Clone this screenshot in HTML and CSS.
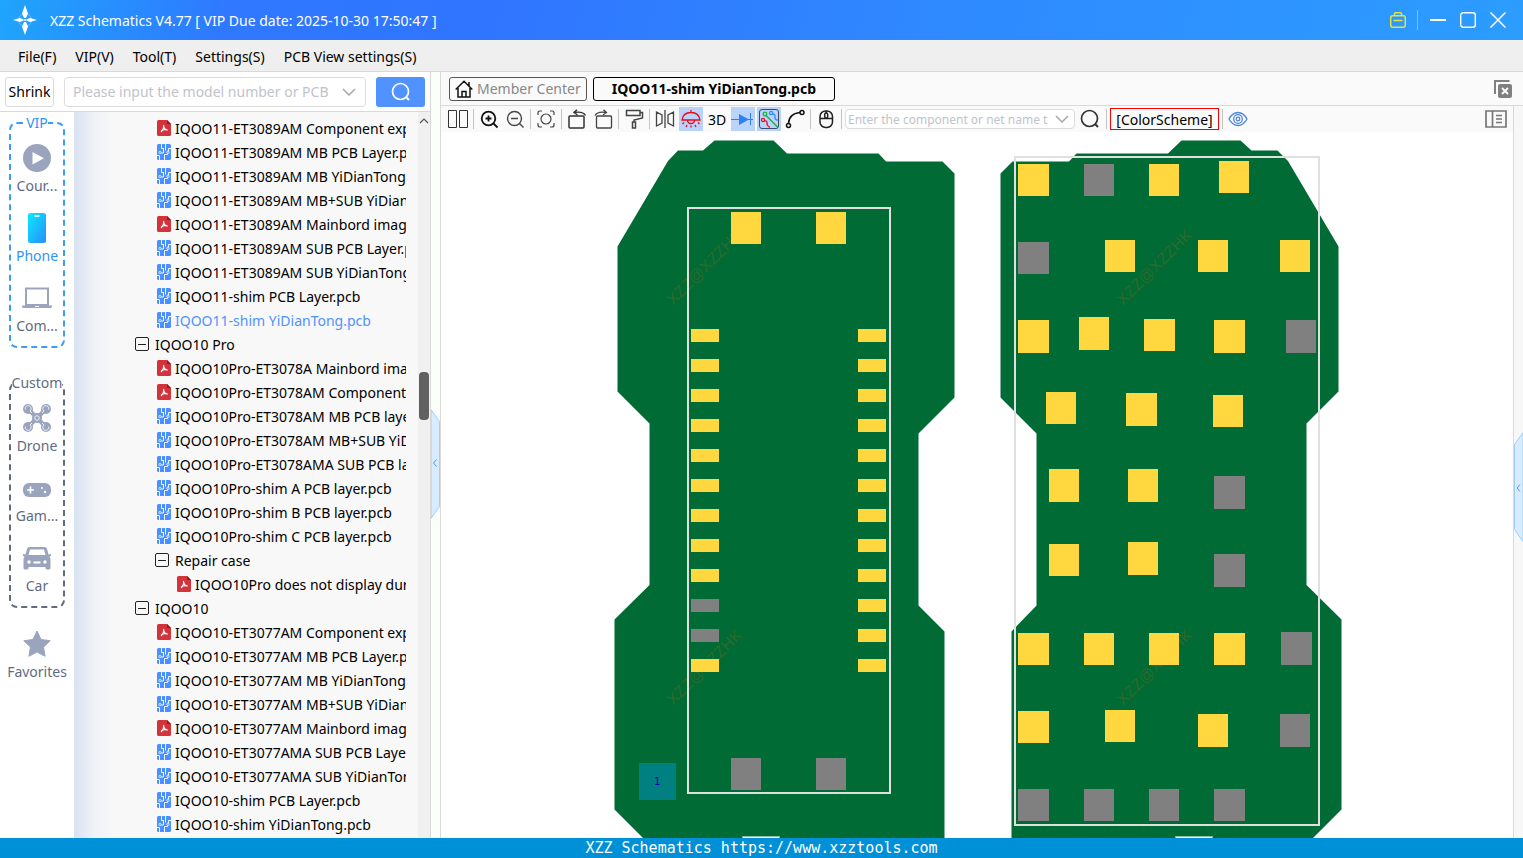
FILE: index.html
```html
<!DOCTYPE html>
<html lang="en">
<head>
  <meta charset="UTF-8">
  <title>XZZ Schematics</title>
  <link rel="stylesheet" href="styles.css">
</head>
<body>
  <!-- shared icons -->
  <svg class="sprite" aria-hidden="true">
    <symbol id="i-pdf" viewBox="0 0 14 16">
      <path d="M1.5 0H10l4 4v10.500q0 1.500-1.500 1.500h-11Q0 16 0 14.500v-13Q0 0 1.500 0z" fill="#d2343c"/>
      <path d="M10 0l4 4h-4z" fill="#8c1a22"/>
      <path d="M6.500 5c1 2-1 5.500-2.500 7M6.800 7c.5 2 2 3 4 3M4 11c2-1.500 4-1.600 6.500-1" fill="none" stroke="#fff" stroke-width="1.100"/>
    </symbol>
    <symbol id="i-pcb" viewBox="0 0 14 16">
      <rect width="14" height="16" rx="1.500" fill="#4a90ff"/>
      <path d="M4.500 0v4.500h2V9H4M8.500 0v6.500M14 4.500h-2.500V7M2.500 16v-4.500H0M7.500 16v-5.500h3V9.500" fill="none" stroke="#fff" stroke-width=".9"/>
      <circle cx="3" cy="8.500" r="1.100" fill="#4a90ff" stroke="#fff" stroke-width=".8"/>
      <circle cx="11" cy="8.300" r="1.200" fill="#4a90ff" stroke="#fff" stroke-width=".8"/>
    </symbol>
    <symbol id="i-down" viewBox="0 0 14 8">
      <path d="M1 1l6 6 6-6" fill="none" stroke="#a4a8b0" stroke-width="1.500"/>
    </symbol>
    <symbol id="i-search" viewBox="0 0 20 20">
      <circle cx="9.500" cy="9.500" r="8" fill="none" stroke="currentColor" stroke-width="1.700"/>
      <path d="M15 15l3 3" stroke="currentColor" stroke-width="1.900"/>
    </symbol>
  </svg>

  <header class="titlebar">
    <svg class="logo" width="24" height="30" viewBox="0 0 24 30">
      <circle cx="12" cy="15" r="6.500" fill="none" stroke="#8fcbff" stroke-opacity=".7"/>
      <path d="M12 0l3 8.500-2 4.500h-2L9 8.500zM12 30l-3-8.500 2-4.500h2l2 4.500zM0 15l7-2 3.500 1.200v1.600L7 17zM24 15l-7-2-3.500 1.200v1.600L17 17z" fill="#fff"/>
      <circle cx="12" cy="15" r="1" fill="#fff"/>
    </svg>
    <span class="app-title">XZZ Schematics V4.77 [ VIP Due date: 2025-10-30 17:50:47 ]</span>
    <div class="window-buttons">
      <button aria-label="Toolbox">
        <svg width="16" height="16" viewBox="0 0 16 16" fill="none" stroke="#e3e43c" stroke-width="1.500"><rect x=".7" y="3.700" width="14.600" height="11.600" rx="2"/><path d="M4.500 3.500V1.700Q4.500.8 5.500.8h5q1 0 1 .9v1.800M3.500 8.500h9"/></svg>
      </button>
      <i class="bar-line"></i>
      <button aria-label="Minimize">
        <svg width="16" height="16" viewBox="0 0 16 16"><path d="M0 8h16" stroke="#fff" stroke-width="2"/></svg>
      </button>
      <button aria-label="Maximize">
        <svg width="16" height="16" viewBox="0 0 16 16"><rect x=".7" y=".7" width="14.600" height="14.600" rx="2.500" fill="none" stroke="#fff" stroke-width="1.400"/></svg>
      </button>
      <button aria-label="Close">
        <svg width="16" height="16" viewBox="0 0 16 16"><path d="M.5.5l15 15m0-15l-15 15" stroke="#fff" stroke-width="1.500"/></svg>
      </button>
    </div>
  </header>

  <nav class="menubar">
    <button>File(F)</button>
    <button>VIP(V)</button>
    <button>Tool(T)</button>
    <button>Settings(S)</button>
    <button>PCB View settings(S)</button>
  </nav>

  <div class="workspace">
    <aside class="sidebar">
      <div class="search-row">
        <button class="shrink">Shrink</button>
        <div class="combo">
          <input type="text" aria-label="Model number" placeholder="Please input the model number or PCB">
          <button aria-label="Show list"><svg width="14" height="8"><use href="#i-down"/></svg></button>
        </div>
        <button class="search-btn" aria-label="Search"><svg width="20" height="20"><use href="#i-search"/></svg></button>
      </div>

      <div class="sidebar-body">
        <nav class="categories">
          <fieldset class="vip">
            <legend>VIP</legend>
            <a href="#">
              <svg width="30" height="30" viewBox="0 0 30 30"><circle cx="15" cy="15" r="14" fill="#9aa5bd"/><path d="M10.500 9v12.500L22 15.200z" fill="#fff"/></svg>
              <span>Cour...</span>
            </a>
            <a href="#" class="current">
              <svg width="30" height="30" viewBox="0 0 30 30">
                <defs><linearGradient id="phone-fill" x1="0" x2="1" y1="0" y2="1"><stop offset="0" stop-color="#08eaff"/><stop offset="1" stop-color="#2b8dfb"/></linearGradient></defs>
                <rect x="6" y="0" width="18" height="30" rx="2.500" fill="url(#phone-fill)"/><path d="M12.500 3h5" stroke="#fff" stroke-width="1.600"/>
              </svg>
              <span>Phone</span>
            </a>
            <a href="#">
              <svg width="30" height="30" viewBox="0 0 30 30"><path d="M4 5.500h22V22H4z" fill="none" stroke="#9aa5bd" stroke-width="2"/><path d="M0 22.500h30v1q0 1.500-2 1.500H2q-2 0-2-1.500z" fill="#9aa5bd"/><path d="M13 23.500h4" stroke="#fff"/></svg>
              <span>Com...</span>
            </a>
          </fieldset>

          <fieldset class="custom">
            <legend>Custom</legend>
            <a href="#">
              <svg width="30" height="30" viewBox="0 0 30 30">
                <path d="M6 6l18 18M24 6L6 24" stroke="#9aa5bd" stroke-width="4"/>
                <g fill="#9aa5bd"><circle cx="6" cy="6" r="5"/><circle cx="24" cy="6" r="5"/><circle cx="6" cy="24" r="5"/><circle cx="24" cy="24" r="5"/><circle cx="15" cy="15" r="5"/></g>
                <g fill="none" stroke="#fff" stroke-width=".8"><circle cx="15" cy="15" r="2.300"/><path d="M3.300 6.500A3 3 0 1 1 8 8l2 2M26.700 6.500A3 3 0 1 0 22 8l-2 2M3.300 23.500A3 3 0 1 0 8 22l2-2M26.700 23.500A3 3 0 1 1 22 22l-2-2"/></g>
              </svg>
              <span>Drone</span>
            </a>
            <a href="#">
              <svg width="30" height="30" viewBox="0 0 30 30"><rect x="1" y="10" width="28" height="14" rx="6" fill="#9aa5bd"/><path d="M5 17h7M8.500 13.500v7" stroke="#fff" stroke-width="1.600"/><circle cx="20" cy="15" r="1" fill="#fff"/><circle cx="23" cy="19" r="1.200" fill="#fff"/></svg>
              <span>Gam...</span>
            </a>
            <a href="#">
              <svg width="30" height="30" viewBox="0 0 30 30">
                <path d="M7.500 4h15q2 0 2.500 2l1.500 5.500L29 11v2l-1.500.5q1 1.500 1 3V25q0 1.500-1.500 1.500h-2q-1.500 0-1.500-1.500v-1h-17v1Q6.500 26.500 5 26.500H3q-1.500 0-1.500-1.500v-8.500q0-1.500 1-3L1 13v-2l2.500.5L5 6q.500-2 2.500-2z" fill="#9aa5bd"/>
                <path d="M8 6.500h14l1.500 5.500h-17zM11.500 18.500h7v2h-7z" fill="#fff"/><circle cx="7" cy="19" r="1.700" fill="#fff"/><circle cx="23" cy="19" r="1.700" fill="#fff"/>
              </svg>
              <span>Car</span>
            </a>
          </fieldset>

          <a href="#" class="favorites">
            <svg width="30" height="30" viewBox="0 0 30 30"><path d="M15 2l4 8.500 9.200 1.200-6.700 6.400 1.600 9.200L15 23l-8.100 4.300 1.600-9.200-6.700-6.400L11 10.500z" fill="#9aa5bd" stroke="#9aa5bd" stroke-linejoin="round"/></svg>
            <span>Favorites</span>
          </a>
        </nav>

        <div class="tree-panel">
          <ul class="tree">
            <li><svg><use href="#i-pdf"/></svg><a href="#">IQOO11-ET3089AM Component explanation.pdf</a></li>
            <li><svg><use href="#i-pcb"/></svg><a href="#">IQOO11-ET3089AM MB PCB Layer.pcb</a></li>
            <li><svg><use href="#i-pcb"/></svg><a href="#">IQOO11-ET3089AM MB YiDianTong.pcb</a></li>
            <li><svg><use href="#i-pcb"/></svg><a href="#">IQOO11-ET3089AM MB+SUB YiDianTong.pcb</a></li>
            <li><svg><use href="#i-pdf"/></svg><a href="#">IQOO11-ET3089AM Mainbord image.pdf</a></li>
            <li><svg><use href="#i-pcb"/></svg><a href="#">IQOO11-ET3089AM SUB PCB Layer.pcb</a></li>
            <li><svg><use href="#i-pcb"/></svg><a href="#">IQOO11-ET3089AM SUB YiDianTong.pcb</a></li>
            <li><svg><use href="#i-pcb"/></svg><a href="#">IQOO11-shim PCB Layer.pcb</a></li>
            <li class="open-file"><svg><use href="#i-pcb"/></svg><a href="#">IQOO11-shim YiDianTong.pcb</a></li>
            <li class="group"><button class="toggle" aria-label="Collapse"></button><span>IQOO10 Pro</span></li>
            <li><svg><use href="#i-pdf"/></svg><a href="#">IQOO10Pro-ET3078A Mainbord image.pdf</a></li>
            <li><svg><use href="#i-pdf"/></svg><a href="#">IQOO10Pro-ET3078AM Component.pdf</a></li>
            <li><svg><use href="#i-pcb"/></svg><a href="#">IQOO10Pro-ET3078AM MB PCB layer.pcb</a></li>
            <li><svg><use href="#i-pcb"/></svg><a href="#">IQOO10Pro-ET3078AM MB+SUB YiDianTong.pcb</a></li>
            <li><svg><use href="#i-pcb"/></svg><a href="#">IQOO10Pro-ET3078AMA SUB PCB layer.pcb</a></li>
            <li><svg><use href="#i-pcb"/></svg><a href="#">IQOO10Pro-shim A PCB layer.pcb</a></li>
            <li><svg><use href="#i-pcb"/></svg><a href="#">IQOO10Pro-shim B PCB layer.pcb</a></li>
            <li><svg><use href="#i-pcb"/></svg><a href="#">IQOO10Pro-shim C PCB layer.pcb</a></li>
            <li class="subgroup"><button class="toggle" aria-label="Collapse"></button><span>Repair case</span></li>
            <li class="deep"><svg><use href="#i-pdf"/></svg><a href="#">IQOO10Pro does not display during startup.pdf</a></li>
            <li class="group"><button class="toggle" aria-label="Collapse"></button><span>IQOO10</span></li>
            <li><svg><use href="#i-pdf"/></svg><a href="#">IQOO10-ET3077AM Component explanation.pdf</a></li>
            <li><svg><use href="#i-pcb"/></svg><a href="#">IQOO10-ET3077AM MB PCB Layer.pcb</a></li>
            <li><svg><use href="#i-pcb"/></svg><a href="#">IQOO10-ET3077AM MB YiDianTong.pcb</a></li>
            <li><svg><use href="#i-pcb"/></svg><a href="#">IQOO10-ET3077AM MB+SUB YiDianTong.pcb</a></li>
            <li><svg><use href="#i-pdf"/></svg><a href="#">IQOO10-ET3077AM Mainbord image.pdf</a></li>
            <li><svg><use href="#i-pcb"/></svg><a href="#">IQOO10-ET3077AMA SUB PCB Layer.pcb</a></li>
            <li><svg><use href="#i-pcb"/></svg><a href="#">IQOO10-ET3077AMA SUB YiDianTong.pcb</a></li>
            <li><svg><use href="#i-pcb"/></svg><a href="#">IQOO10-shim PCB Layer.pcb</a></li>
            <li><svg><use href="#i-pcb"/></svg><a href="#">IQOO10-shim YiDianTong.pcb</a></li>
          </ul>
          <div class="scrollbar">
            <svg width="10" height="6" viewBox="0 0 10 6"><path d="M1 5l4-4 4 4" fill="none" stroke="#555" stroke-width="1.200"/></svg>
            <div class="thumb"></div>
          </div>
        </div>
      </div>
    </aside>

    <div class="gutter">
      <button class="handle" aria-label="Collapse sidebar">
        <svg width="9" height="110" viewBox="0 0 9 110"><path d="M0 .5l8.500 12v85L0 109.500z" fill="#d8ebff" stroke="#9fd0f8"/><path d="M5.500 50.500l-3 3.500 3 3.500" fill="none" stroke="#45a0f0"/></svg>
      </button>
    </div>

    <main class="viewer">
      <div class="tabs">
        <button class="tab">
          <svg width="18" height="18" viewBox="0 0 18 18" fill="none" stroke="#111" stroke-width="1.500"><path d="M.7 9.500L9 1.200l8.300 8.300M3 8v9h12V8M7 17v-5.500h4V17M14 6V2"/></svg>
          Member Center
        </button>
        <button class="tab active">IQOO11-shim YiDianTong.pcb</button>
        <button class="close-all" aria-label="Close all tabs">
          <svg width="18" height="18" viewBox="0 0 18 18"><path d="M1 14V1h14.500" fill="none" stroke="#808080" stroke-width="2"/><rect x="4" y="4" width="14" height="14" rx="2" fill="#808080"/><path d="M8 8l6 6m0-6l-6 6" stroke="#fff" stroke-width="1.800"/></svg>
        </button>
      </div>

      <div class="board-area">
        <div class="toolbar">
          <button aria-label="Split view"><svg width="20" height="20" viewBox="0 0 20 20" fill="none" stroke="#333"><path d="M.5 1.500h8v17h-8zM11.500 1.500h8v17h-8z"/></svg></button>
          <i></i>
          <button aria-label="Zoom in"><svg width="20" height="20" viewBox="0 0 20 20" fill="none" stroke="#111" stroke-width="1.800"><circle cx="9.500" cy="9.500" r="6.800"/><path d="M14.500 14.500l4 4M6.500 9.500h6M9.500 6.500v6"/></svg></button>
          <button aria-label="Zoom out"><svg width="20" height="20" viewBox="0 0 20 20" fill="none" stroke="#444" stroke-width="1.400"><circle cx="9.500" cy="9.500" r="7"/><path d="M14.500 14.500l4 4M6 9.500h7"/></svg></button>
          <i></i>
          <button aria-label="Fit"><svg width="20" height="20" viewBox="0 0 20 20" fill="none" stroke="#444" stroke-width="1.200"><circle cx="10" cy="10" r="5"/><path d="M2 6V4q0-2 2-2h2M14 2h2q2 0 2 2v2M18 14v2q0 2-2 2h-2M6 18H4q-2 0-2-2v-2"/></svg></button>
          <i></i>
          <button aria-label="Rotate left"><svg width="20" height="20" viewBox="0 0 20 20" fill="none" stroke="#333" stroke-width="1.500"><rect x="2" y="7" width="15" height="12" rx="1"/><path d="M18.500 6.500Q16 2 7 3.500M10 .8L7 3.500 10.500 6"/></svg></button>
          <button aria-label="Rotate right"><svg width="20" height="20" viewBox="0 0 20 20" fill="none" stroke="#444" stroke-width="1.300"><rect x="3.500" y="7" width="15" height="12" rx="1"/><path d="M2 6.500Q4.500 2 13.500 3.500M10.500.8l3 2.700L10 6"/></svg></button>
          <i></i>
          <button aria-label="Paint"><svg width="20" height="20" viewBox="0 0 20 20" fill="none" stroke="#444" stroke-width="1.500"><path d="M2.500 1.500H16v5H2.500zM16 3.500h2.500V9L10 11v2M8.500 13h3v6h-3z"/></svg></button>
          <i></i>
          <button aria-label="Mirror"><svg width="20" height="20" viewBox="0 0 20 20" fill="none" stroke="#444" stroke-width="1.300"><path d="M1.500 3L7 6v8l-5.500 3zM18.500 3L13 6v8l5.500 3zM10 1v18"/></svg></button>
          <button class="on" aria-label="Lamp"><svg width="20" height="20" viewBox="0 0 20 20" fill="none" stroke="#f00816" stroke-width="1.300"><path d="M10 1v2M1 11Q2 3.500 10 3.500T19 11zM6.500 11q0 3.500 3.500 3.500t3.500-3.500M3 13.500L1.500 15M17 13.500l1.500 1.500M6 16l-1 2M14 16l1 2M10 16.500v2"/></svg></button>
          <button class="text-tool">3D</button>
          <button class="on" aria-label="Diode"><svg width="24" height="20" viewBox="0 0 24 20"><path d="M0 10.500h22M19.500 4v12" stroke="#2f7ff5"/><path d="M8 5v11l10-5.500z" fill="#2f7ff5"/></svg></button>
          <button class="on" aria-label="Nets"><svg width="20" height="20" viewBox="0 0 20 20" fill="none" stroke-width="1.300"><rect x=".5" y=".5" width="19" height="19" rx="2.500" stroke="#3b4a66" stroke-width="1"/><circle cx="6" cy="5" r="1.800" stroke="#16b035"/><path d="M7 6.500L19 18.500" stroke="#16b035"/><circle cx="12" cy="4" r="1.600" stroke="#2f8dfb"/><path d="M13.500 5q3 0 2.500 3t3 3" stroke="#2f8dfb"/><circle cx="4" cy="11" r="1.600" stroke="#f01020"/><path d="M5.500 12q3-.5 2.500 2t3 4.500" stroke="#f01020"/></svg></button>
          <button aria-label="Curve"><svg width="20" height="20" viewBox="0 0 20 20" fill="none" stroke="#111" stroke-width="1.500"><circle cx="3.500" cy="16.500" r="2"/><circle cx="17" cy="3.500" r="2"/><path d="M3.500 14.500Q4 4.500 15 3.500"/></svg></button>
          <i></i>
          <button aria-label="Mouse"><svg width="20" height="20" viewBox="0 0 20 20" fill="none" stroke="#222" stroke-width="1.500"><rect x="4" y="2" width="12.500" height="16.500" rx="5.500"/><path d="M4 9.500h12.500M10.200 2v2"/><rect x="8.700" y="4" width="3" height="5" rx="1.500"/></svg></button>
          <i></i>
          <div class="combo net-search">
            <input type="text" aria-label="Component or net name" placeholder="Enter the component or net name to search">
            <button aria-label="Show list"><svg width="14" height="8"><use href="#i-down"/></svg></button>
          </div>
          <button class="find" aria-label="Find"><svg width="20" height="20"><use href="#i-search"/></svg></button>
          <i></i>
          <button class="color-scheme">[ColorScheme]</button>
          <i></i>
          <button aria-label="Visibility"><svg width="20" height="20" viewBox="0 0 20 20" fill="none" stroke="#4a86e0" stroke-width="1.300"><path d="M1 10q3.500-6.500 9-6.500T19 10q-3.500 6.500-9 6.500T1 10z"/><circle cx="10" cy="10" r="4.300"/><circle cx="10" cy="10" r="1.800"/></svg></button>
          <button class="panel-btn" aria-label="Side panel"><svg width="22" height="18" viewBox="0 0 22 18" fill="none" stroke="#777" stroke-width="1.700"><path d="M1 1h20v16H1zM7.500 1v16M11 5.500h6M11 9h6M11 12.500h6"/></svg></button>
        </div>

        <svg class="board" viewBox="441 132 1072 706" preserveAspectRatio="xMinYMin meet">
          <!-- board outlines -->
          <g class="outline">
            <path d="M668 161l10-10.500h25l11.500-10h59l13.500 13h91.500l7.500 8h56.500l12 12v224l-36 36V605.500l26 26V840H645l-30.500-30.500v-190l35-34.500V423.500l-32-32v-145z"/>
            <path d="M1288 161l-10.500-10.500h-26l-11-10h-59l-13.500 13h-91.500l-7.500 8h-56.500l-12 12v224l36 36v172l-25 26V840H1311l30.500-30.500v-190l-35-34.500V423.500l32-32v-145z"/>
          </g>
          <path class="slot" d="M742.500 840v-3.500h37v3.500M1175.500 840v-3.500h37v3.500"/>
          <g class="watermark">
            <text transform="translate(673 306) rotate(-45)">XZZ@XZZHK</text>
            <text transform="translate(1123 306) rotate(-45)">XZZ@XZZHK</text>
            <text transform="translate(673 706) rotate(-45)">XZZ@XZZHK</text>
            <text transform="translate(1123 706) rotate(-45)">XZZ@XZZHK</text>
          </g>
          <g class="frame">
            <rect x="688" y="208" width="202" height="585"/>
            <rect x="1015" y="157" width="304" height="668"/>
          </g>
          <g id="pads"></g>
          <rect x="639" y="763" width="37" height="37" fill="#008080"/>
          <text class="pin" x="657" y="785">1</text>
        </svg>
      </div>
    </main>

    <div class="gutter right">
      <button class="handle" aria-label="Open panel">
        <svg width="9" height="110" viewBox="0 0 9 110"><path d="M9 .5L.5 12.500v85l8.500 12z" fill="#d8ebff" stroke="#9fd0f8"/><path d="M6 52.500l-3 3.500 3 3.500" fill="none" stroke="#45a0f0"/></svg>
      </button>
    </div>
  </div>

  <footer class="statusbar">XZZ Schematics https://www.xzztools.com</footer>

  <script src="board.js"></script>
</body>
</html>
```

FILE: styles.css
```css
* {
  box-sizing: border-box;
}
body {
  margin: 0;
  height: 100vh;
  display: flex;
  flex-direction: column;
  overflow: hidden;
  background: #fff;
  color: #000;
  font-family: "Noto Sans", "Open Sans", sans-serif;
  font-size: 14px;
}
button, input {
  font: inherit;
  color: inherit;
  margin: 0;
}
button {
  border: none;
  background: none;
  padding: 0;
  cursor: pointer;
}
a {
  color: inherit;
  text-decoration: none;
}
svg {
  flex: none;
  display: block;
}
.sprite {
  position: absolute;
  width: 0;
  height: 0;
}

/* Title bar */
.titlebar {
  flex: none;
  height: 40px;
  padding: 0 17px 0 13px;
  display: flex;
  align-items: center;
  color: #fff;
  background: linear-gradient(100deg, #1fa5fc 0%, #2f78ff 15%, #3075ff 32%, #2f88ff 60%, #2c9dff 100%);
}
.app-title {
  margin-left: 13px;
}
.window-buttons {
  margin-left: auto;
  display: flex;
  align-items: center;
  gap: 14px;
}
.window-buttons .bar-line {
  width: 1px;
  height: 20px;
  margin: 0 -2px 0 -3px;
  background: #7cc0ff;
}

/* Menu */
.menubar {
  flex: none;
  height: 32px;
  padding: 2px 18px 0;
  display: flex;
  align-items: center;
  gap: 19px;
  background: #efefef;
  border-bottom: 1px solid #d9d9d9;
}

.workspace {
  flex: 1;
  min-height: 0;
  display: flex;
}

/* Sidebar */
.sidebar {
  flex: none;
  width: 431px;
  display: flex;
  flex-direction: column;
  border-right: 1px solid #d9d9d9;
}
.search-row {
  flex: none;
  height: 40px;
  padding: 0 5px;
  display: flex;
  align-items: center;
  gap: 10px;
  border-bottom: 1px solid #d9d9d9;
}
.shrink {
  flex: none;
  width: 49px;
  height: 30px;
  border: 1px solid #d9d9d9;
  border-radius: 3px;
}
.combo {
  flex: 1;
  height: 30px;
  padding: 0 9px 0 8px;
  display: flex;
  align-items: center;
  gap: 7px;
  background: #fff;
  border: 1px solid #dcdcdc;
  border-radius: 4px;
}
.combo input {
  flex: 1;
  min-width: 0;
  padding: 0;
  border: none;
  outline: none;
  background: none;
}
.combo input::placeholder {
  color: #bfc3cb;
}
.search-btn {
  flex: none;
  width: 49px;
  height: 30px;
  display: flex;
  align-items: center;
  justify-content: center;
  color: #fff;
  background: #5092ff;
  border-radius: 3px;
}
.sidebar-body {
  flex: 1;
  min-height: 0;
  display: flex;
}

/* Category column */
.categories {
  flex: none;
  width: 74px;
  padding: 1px 9px;
}
.categories fieldset {
  height: 235px;
  min-width: 0;
  margin: 0 0 25px;
  padding: 10px 0 0;
  border: 2px dashed #606b82;
  border-radius: 8px;
}
.categories .custom {
  margin-bottom: 21px;
  color: #606b82;
}
.categories .vip {
  color: #2f93f5;
  border-color: #3d9cf5;
}
.categories legend {
  margin: 0 auto;
  padding: 0;
  line-height: 20px;
}
.categories a {
  height: 70px;
  display: flex;
  flex-direction: column;
  align-items: center;
  gap: 3px;
  color: #606b82;
  line-height: 20px;
}
.categories .current {
  color: #2f93f5;
}
.categories span {
  white-space: nowrap;
}

/* File tree */
.tree-panel {
  flex: 1;
  min-width: 0;
  display: flex;
  background: linear-gradient(90deg, #d9e2f1 0, #eff2f7 20px, #f8f8f8 40px);
}
.tree {
  flex: 1;
  min-width: 0;
  margin: 0 12px 0 0;
  padding: 4px 0 0 83px;
  overflow: hidden;
  list-style: none;
}
.tree li {
  height: 24px;
  display: flex;
  align-items: center;
  gap: 4px;
  overflow: hidden;
  white-space: nowrap;
}
.tree svg {
  width: 14px;
  height: 16px;
}
.tree .open-file {
  color: #5092ff;
}
.tree .group {
  margin-left: -22px;
  gap: 6px;
}
.tree .subgroup {
  margin-left: -2px;
  gap: 6px;
}
.tree .deep {
  padding-left: 20px;
}
.toggle {
  flex: none;
  width: 14px;
  height: 14px;
  display: flex;
  align-items: center;
  justify-content: center;
  border: 1px solid #222;
  border-radius: 2px;
}
.toggle::after {
  content: "";
  width: 8px;
  height: 1px;
  background: #222;
}
.scrollbar {
  flex: none;
  width: 12px;
  padding: 6px 1px 0 0;
  background: #f0f0f0;
  display: flex;
  flex-direction: column;
  align-items: center;
  gap: 248px;
}
.thumb {
  width: 10px;
  height: 48px;
  border-radius: 4px;
  background: #606060;
}

/* Strips with the fold handles */
.gutter {
  flex: none;
  width: 9px;
  display: flex;
  align-items: center;
  background: #fbfffa;
}
.gutter .handle {
  margin-top: 18px;
}
.gutter.right {
  background: #f7f7f7;
  margin-top: 34px;
}
.gutter.right .handle {
  margin-top: 30px;
}

/* Viewer */
.viewer {
  flex: 1;
  min-width: 0;
  display: flex;
  flex-direction: column;
  border-left: 1px solid #d9d9d9;
}
.tabs {
  flex: none;
  height: 34px;
  margin-right: -9px;
  padding: 0 11px 0 8px;
  display: flex;
  align-items: center;
  gap: 6px;
  background: #fafafa;
  border-bottom: 1px solid #d9d9d9;
}
.tab {
  height: 24px;
  padding: 0 5px;
  display: flex;
  align-items: center;
  gap: 4px;
  border: 1px solid #555;
  border-radius: 3px;
  color: #888;
}
.tab.active {
  padding: 0 18px;
  border-color: #000;
  color: #000;
  font-weight: bold;
}
.close-all {
  margin-left: auto;
}
.board-area {
  flex: 1;
  min-height: 0;
  display: flex;
  flex-direction: column;
  border-right: 1px solid #d9d9d9;
}
.toolbar {
  flex: none;
  height: 26px;
  padding: 0 5px;
  display: flex;
  align-items: center;
  gap: 2px;
  background: #fafafa;
}
.toolbar > i {
  flex: none;
  width: 1px;
  height: 20px;
  margin: 0 1px;
  background: #c4c4c4;
}
.toolbar > button {
  flex: none;
  width: 24px;
  height: 24px;
  display: flex;
  align-items: center;
  justify-content: center;
}
.toolbar > .on {
  background: #b9d3fb;
}
.toolbar > .find {
  width: 26px;
  color: #333;
}
.toolbar > .color-scheme {
  width: 109px;
  height: 22px;
  border: 1px solid #f00;
}
.toolbar > .panel-btn {
  margin-left: auto;
}
.net-search {
  flex: none;
  width: 230px;
  height: 20px;
  padding: 0 5px 0 2px;
  font-size: 12px;
}

/* Board drawing */
.board {
  flex: 1;
  min-height: 0;
  width: 100%;
}
.outline path {
  fill: #006b34;
}
.slot {
  fill: #fff;
  stroke: #8fbfa4;
}
.frame rect {
  fill: none;
  stroke: #e0e0e0;
  stroke-width: 2;
}
.watermark text {
  font: 16px "Liberation Sans", Arial, sans-serif;
  fill: #2c6a2c;
}
.pad {
  fill: #ffd840;
}
.pad.empty {
  fill: #808080;
}
.pin {
  font: 10px "DejaVu Sans Mono", monospace;
  fill: #0000b0;
  text-anchor: middle;
}

.statusbar {
  flex: none;
  height: 20px;
  line-height: 20px;
  text-align: center;
  color: #fff;
  background: #0090d8;
  font-family: "DejaVu Sans Mono", monospace;
  font-size: 15px;
}
```

FILE: board.js
```js
// x, y, width, height, 1 = no net connected
const pads = [
  [731, 212, 30, 32], [816, 212, 30, 32],
  [731, 758, 30, 32, 1], [816, 758, 30, 32, 1],

  [1018, 164, 31, 32], [1084, 164, 30, 32, 1], [1149, 164, 30, 32], [1219, 161, 30, 32],
  [1018, 242, 31, 32, 1], [1105, 240, 30, 32], [1198, 240, 30, 32], [1280, 240, 30, 32],
  [1018, 320, 31, 33], [1079, 317, 30, 33], [1144, 319, 31, 32], [1214, 320, 31, 33], [1286, 320, 30, 33, 1],
  [1046, 392, 30, 32], [1126, 393, 31, 33], [1213, 395, 30, 32],
  [1049, 469, 30, 33], [1128, 469, 30, 33], [1214, 476, 31, 33, 1],
  [1049, 544, 30, 32], [1128, 542, 30, 33], [1214, 554, 31, 33, 1],
  [1018, 633, 31, 32], [1084, 633, 30, 32], [1149, 633, 30, 32], [1214, 633, 31, 32], [1281, 632, 31, 33, 1],
  [1018, 711, 31, 32], [1105, 710, 30, 32], [1198, 714, 30, 33], [1280, 714, 30, 33, 1],
  [1018, 789, 31, 32, 1], [1084, 789, 30, 32, 1], [1149, 789, 30, 32, 1], [1214, 789, 31, 32, 1]
];

// connector pins down both sides
for (let i = 0; i < 12; i++) {
  const y = 329 + i * 30;
  pads.push([691, y, 28, 13, i === 9 || i === 10]);
  pads.push([858, y, 28, 13]);
}

const layer = document.getElementById('pads');
pads.forEach(([x, y, w, h, empty]) => {
  const rect = document.createElementNS('http://www.w3.org/2000/svg', 'rect');
  rect.setAttribute('x', x);
  rect.setAttribute('y', y);
  rect.setAttribute('width', w);
  rect.setAttribute('height', h);
  rect.setAttribute('class', empty ? 'pad empty' : 'pad');
  layer.appendChild(rect);
});
```
